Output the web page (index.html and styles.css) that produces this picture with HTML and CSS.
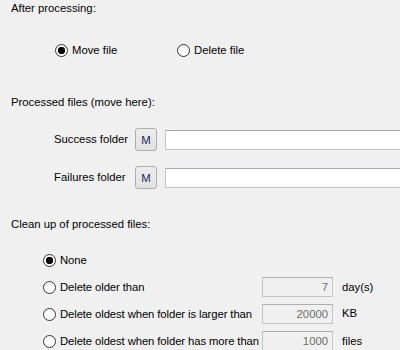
FILE: index.html
```html
<!DOCTYPE html>
<html lang="en">
<head>
    <meta charset="UTF-8">
    <title>Processing options</title>
    <link rel="stylesheet" href="styles.css">
</head>
<body>
    <div class="panel">
        <div class="heading heading-after">After processing:</div>
        <div class="after-options">
            <label class="option"><input type="radio" name="after" checked>Move file</label>
            <label class="option"><input type="radio" name="after">Delete file</label>
        </div>

        <div class="heading heading-processed">Processed files (move here):</div>
        <div class="folders">
            <div class="folder-row">
                <span class="folder-label">Success folder</span>
                <button class="macro-btn">M</button>
                <input class="path-input" type="text">
            </div>
            <div class="folder-row">
                <span class="folder-label">Failures folder</span>
                <button class="macro-btn">M</button>
                <input class="path-input" type="text">
            </div>
        </div>

        <div class="heading heading-cleanup">Clean up of processed files:</div>
        <div class="cleanup">
            <label class="option"><input type="radio" name="cleanup" checked>None</label>
            <span></span>
            <span></span>

            <label class="option"><input type="radio" name="cleanup">Delete older than</label>
            <input class="num-input" type="text" value="7" disabled>
            <span class="unit">day(s)</span>

            <label class="option"><input type="radio" name="cleanup">Delete oldest when folder is larger than</label>
            <input class="num-input" type="text" value="20000" disabled>
            <span class="unit unit-kb">KB</span>

            <label class="option"><input type="radio" name="cleanup">Delete oldest when folder has more than</label>
            <input class="num-input" type="text" value="1000" disabled>
            <span class="unit">files</span>
        </div>
    </div>
</body>
</html>
```

FILE: styles.css
```css
body {
    margin: 0;
    background: #f0f0f0;
    font-family: "Liberation Sans", Arial, sans-serif;
    font-size: 11.3px;
    line-height: 15px;
    color: #000;
    overflow: hidden;
}
.panel {
    width: 400px;
    overflow: hidden;
    padding-top: 1px;
}
.heading {
    padding-left: 11px;
    height: 15px;
}
.heading-processed {
    margin-top: 37px;
}
.heading-cleanup {
    margin-top: 28px;
}

/* radio buttons */
.option {
    display: flex;
    align-items: center;
    white-space: nowrap;
}
.option input {
    appearance: none;
    -webkit-appearance: none;
    width: 13px;
    height: 13px;
    margin: 0 4px 0 0;
    border: 1px solid #333;
    border-radius: 50%;
    background: #fff;
    flex: none;
}
.option input:checked {
    background: radial-gradient(circle, #000 0, #000 3.4px, #fff 4px);
}

.after-options {
    display: flex;
    margin-top: 27px;
    padding-left: 55px;
    height: 15px;
}
.after-options .option {
    width: 122px;
}

/* folder rows */
.folders {
    display: flex;
    flex-direction: column;
    gap: 15px;
    margin-top: 18px;
}
.folder-row {
    display: flex;
    align-items: center;
    height: 23px;
    padding-left: 54px;
}
.folder-label {
    flex: none;
    width: 81px;
    white-space: nowrap;
}
.macro-btn {
    flex: none;
    width: 22px;
    height: 23px;
    padding: 0;
    margin-right: 8px;
    border: 1px solid #adadad;
    border-radius: 3px;
    background: linear-gradient(#ececec, #e2e2e2);
    font-family: "Liberation Sans", Arial, sans-serif;
    font-size: 11.3px;
    color: #1c2657;
}
.path-input {
    flex: none;
    width: 260px;
    height: 20px;
    box-sizing: border-box;
    margin: 0;
    border: 1px solid #c4c4c4;
    border-top-color: #a8a8b0;
    background: #fff;
}

/* clean up */
.cleanup {
    display: grid;
    grid-template-columns: 219px 80px auto;
    grid-auto-rows: 20px;
    row-gap: 7px;
    align-items: center;
    margin-top: 18px;
    padding-left: 43px;
}
.cleanup .option {
    letter-spacing: -0.1px;
}
.num-input {
    width: 71px;
    height: 20px;
    box-sizing: border-box;
    margin: 0;
    padding: 0 4px 0 0;
    border: 1px solid #c4c4c4;
    border-top-color: #adadad;
    background: #f0f0f0;
    font-family: "Liberation Sans", Arial, sans-serif;
    font-size: 11.3px;
    color: #6d6d6d;
    text-align: right;
}
.unit-kb {
    margin-top: -2px;
}
```
